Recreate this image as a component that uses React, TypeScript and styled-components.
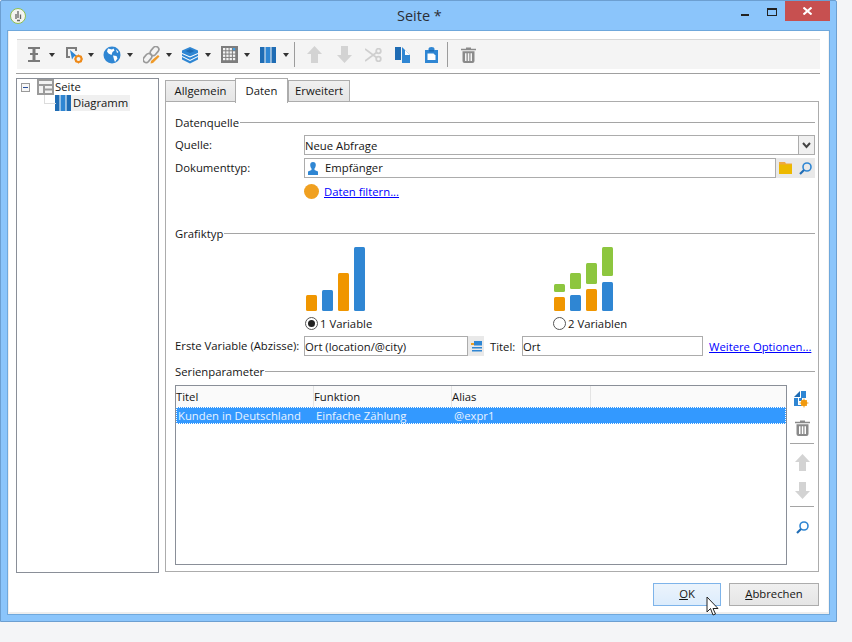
import React from "react";
import styled, { createGlobalStyle } from "styled-components";

const Global = createGlobalStyle`
  html, body { margin: 0; padding: 0; background: #f4f5f7; }
  body { font-family: "Open Sans", "Liberation Sans", sans-serif; font-size: 11.3px; color: #151515; }
  #root { width: 852px; height: 642px; overflow: hidden; }
`;

const Win = styled.div`
  box-sizing: border-box; width: 837px; height: 622px;
  background: #8bc5fb; border: 1px solid #6c9fd1; border-radius: 2px 2px 0 0;
  padding: 0 6px 6px; display: flex; flex-direction: column;
`;
const TitleBar = styled.div`
  height: 29px; flex: none; display: flex; position: relative; align-items: flex-start;
`;
const AppIcon = styled.svg`margin: 7px 0 0 3px;`;
const TitleText = styled.div`
  position: absolute; left: 390px; top: 5px; font-size: 14.5px; line-height: 20px; color: #2b2f36;
`;
const Controls = styled.div`margin-left: auto; display: flex; align-items: flex-start;`;
const MinBtn = styled.div`width: 8px; height: 2px; background: #222; margin: 13px 18px 0 0;`;
const MaxBtn = styled.div`
  box-sizing: border-box; width: 10px; height: 8px; border: 1px solid #222; border-top-width: 2px; margin: 7px 8px 0 0;
`;
const CloseBtn = styled.div`
  width: 45px; height: 20px; background: #c75050; display: flex; align-items: center; justify-content: center;
`;

const Client = styled.div`
  flex: 1; min-height: 0; box-sizing: border-box; background: #fff;
  border: 1px solid #6fa8dc; box-shadow: inset 1px -2px 0 #eeeeee, inset -1px 0 0 #f4f4f4;
  padding: 8px 9px 0 8px; display: flex; flex-direction: column;
`;
const Toolbar = styled.div`
  margin-left: 1px; height: 30px; flex: none; box-sizing: border-box; background: #f4f4f4;
  border-top: 1px solid #d8d8d8; padding-left: 9px; display: flex; align-items: center;
`;
const ToolMenu = styled.div<{ $w?: number }>`
  width: ${p => p.$w ?? 39}px; flex: none; display: flex; align-items: center; gap: 5px;
`;
const ToolIcon = styled.div<{ $w?: number }>`
  width: ${p => p.$w ?? 30}px; flex: none; display: flex; align-items: center;
`;
const Caret = styled.div`
  width: 0; height: 0; border: 3.5px solid transparent; border-top: 4px solid #333; border-bottom: 0;
`;
const ToolSep = styled.div<{ $after: number }>`
  width: 1px; height: 25px; background: #9c9c9c; flex: none; margin-right: ${p => p.$after}px;
`;
const HRule = styled.div`height: 1px; background: #a0a0a0; margin-top: 4px; flex: none;`;

const Main = styled.div`
  margin-top: 4px; height: 495px; flex: none; display: flex; gap: 6px;
`;
const Tree = styled.div`
  width: 143px; box-sizing: border-box; border: 1px solid #8a8f98; flex: none; padding-top: 0; position: relative;
`;
const TreeRow = styled.div<{ $indent: number }>`
  display: flex; align-items: center; height: 16px; padding-left: ${p => p.$indent}px;
`;
const Expander = styled.div`
  box-sizing: border-box; width: 9px; height: 9px; border: 1px solid #9a9a9a; margin-right: 7px;
  display: flex; align-items: center; justify-content: center; background: #f6f6f6;
  &::after { content: ""; width: 5px; height: 1px; background: #2a4f9a; }
`;
const TreeLabel = styled.div<{ $selected?: boolean }>`
  line-height: 16px; padding: 0 2px 0 ${p => (p.$selected ? 2 : 1)}px;
  background: ${p => (p.$selected ? "#f0f0f0" : "transparent")};
`;
const Connector = styled.div`
  position: absolute; left: 27px; top: 16px; width: 11px; height: 8px;
  border-left: 1px solid #dcdcdc; border-bottom: 1px solid #dcdcdc;
`;

const TabsArea = styled.div`flex: 1; min-width: 0; display: flex; flex-direction: column; height: 494px; margin-right: 1px;`;
const TabBar = styled.div`height: 24px; flex: none; display: flex; align-items: flex-end; position: relative; z-index: 1; margin-bottom: -1px;`;
const Tab = styled.div<{ $active?: boolean; $w: number }>`
  box-sizing: border-box; width: ${p => p.$w}px; height: ${p => (p.$active ? 25 : 22)}px;
  margin-left: ${p => (p.$active ? -1 : 0)}px;
  border: 1px solid #acacac; border-bottom: ${p => (p.$active ? "none" : "1px solid #acacac")};
  background: ${p => (p.$active ? "#fff" : "linear-gradient(#f0f0f0, #e5e5e5)")};
  display: flex; align-items: center; justify-content: center; padding-bottom: 2px;
  ${p => (p.$active ? "position: relative; top: 1px;" : "")}
`;
const Panel = styled.div`
  flex: 1; min-height: 0; box-sizing: border-box; border: 1px solid #acacac; background: #fff;
  padding: 12px 3px 6px 9px; display: flex; flex-direction: column;
`;
const Legend = styled.div<{ $top?: number }>`
  display: flex; align-items: center; gap: 1px; height: 16px; flex: none; margin-top: ${p => p.$top ?? 0}px;
  &::after { content: ""; flex: 1; height: 1px; background: #a5a5a5; }
`;
const FieldRow = styled.div<{ $top: number }>`
  display: flex; align-items: center; height: 20px; flex: none; margin-top: ${p => p.$top}px;
`;
const Label = styled.div<{ $w?: number }>`
  width: ${p => (p.$w ? `${p.$w}px` : "auto")}; flex: none; margin-top: -2px;
`;
const Input = styled.div<{ $w?: number }>`
  box-sizing: border-box; height: 20px; border: 1px solid #acacac; background: #fff;
  padding-left: 0; display: flex; align-items: center; gap: 7px; min-width: 0;
  ${p => (p.$w ? `width: ${p.$w}px; flex: none;` : "flex: 1;")}
`;
const Raised = styled.span`margin-top: -2px;`;
const DropArrow = styled.div`
  margin-left: auto; width: 16px; height: 18px; box-sizing: border-box; border-left: 1px solid #acacac;
  background: #f0f0f0; display: flex; align-items: center; justify-content: center;
`;
const FieldButtons = styled.div<{ $w: number }>`
  width: ${p => p.$w}px; height: 20px; flex: none; background: #e9e9e9; display: flex; align-items: center; justify-content: space-around;
`;
const Link = styled.a`color: #0000ff; text-decoration: underline; cursor: pointer;`;
const FilterRow = styled.div`
  display: flex; align-items: center; gap: 5px; height: 16px; margin: 5px 0 0 129px; flex: none;
`;
const Dot = styled.div`width: 15px; height: 15px; border-radius: 50%; background: #f0a020; flex: none;`;
const ChartRow = styled.div`display: flex; padding-left: 130px; margin-top: 6px; flex: none;`;
const ChartOption = styled.div`width: 248px; display: flex; flex-direction: column; align-items: flex-start;`;
const ChartSvg = styled.svg`margin-left: 1px; display: block;`;
const RadioLine = styled.div`margin-top: 5px; height: 14px; display: flex; align-items: center; gap: 2px;`;
const Radio = styled.div<{ $on?: boolean }>`
  box-sizing: border-box; width: 13px; height: 13px; border-radius: 50%; border: 1px solid #555; background: #fff;
  display: flex; align-items: center; justify-content: center;
  &::after { content: ""; width: 7px; height: 7px; border-radius: 50%; background: ${p => (p.$on ? "#222" : "transparent")}; }
`;
const TableWrap = styled.div`flex: 1; min-height: 0; display: flex; margin-top: 6px;`;
const Table = styled.div`
  flex: none; width: 612px; box-sizing: border-box; border: 1px solid #8a8f98; background: #fff; padding-top: 0;
`;
const HeaderRow = styled.div`display: flex; height: 21px; background: #fafafa;`;
const HeadCell = styled.div<{ $w: number }>`
  box-sizing: border-box; width: ${p => p.$w}px; padding-left: 0; line-height: 21px; border-right: 1px solid #e4e4e4;
`;
const DataRow = styled.div`
  display: flex; height: 17px; background: #3399ff; color: #e8f3ff; outline: 1px dotted #fff; outline-offset: -1px; align-items: center;
`;
const DataCell = styled.div<{ $w: number }>`width: ${p => p.$w}px; padding-left: 2px; box-sizing: border-box;`;
const SideBar = styled.div`
  width: 26px; margin-left: 2px; flex: none; display: flex; flex-direction: column; align-items: center;
`;
const SideIcon = styled.div<{ $top: number }>`margin-top: ${p => p.$top}px; height: 16px; display: flex; align-items: center; justify-content: center;`;
const SideRule = styled.div<{ $top: number }>`width: 24px; height: 1px; background: #a5a5a5; margin-top: ${p => p.$top}px;`;

const Footer = styled.div`
  flex: none; display: flex; justify-content: flex-end; gap: 8px; margin-top: 10px; padding-right: 1px;
`;
const Btn = styled.div<{ $w: number; $primary?: boolean }>`
  box-sizing: border-box; width: ${p => p.$w}px; height: 23px; position: relative; padding-bottom: 2px;
  border: 1px solid ${p => (p.$primary ? "#7eb4ea" : "#acacac")};
  background: ${p => (p.$primary ? "linear-gradient(#ecf4fc, #dcecfc)" : "linear-gradient(#f0f0f0, #e5e5e5)")};
  display: flex; align-items: center; justify-content: center;
`;
const Cursor = styled.svg`position: absolute; left: 52px; top: 12px;`;
const BeamSvg = styled.svg`margin-left: 2px;`;
const Spacer = styled.span`width: 3px; flex: none; margin-right: -7px;`;
const TitleLabel = styled.div`width: 32px; margin-left: 6px; flex: none;`;
const OptionsLink = styled(Link)`margin-left: 6px; white-space: nowrap;`;

const gray = "#8a8a8a";
const blue = "#2f86d3";
const dark = "#1f6cb4";
const orange = "#f09600";

const IBeam = () => (
  <BeamSvg width="12" height="18" viewBox="0 0 12 18"><path d="M0 1h12v2H7.500v4H10v2H7.500v5H12v2H0v-2h4.500V9H2V7h2.500V3H0z" fill="#7a7a7a" /></BeamSvg>
);
const ActionIcon = () => (
  <svg width="18" height="18" viewBox="0 0 18 18">
    <path d="M1 1h11v4h-2V3H3v7h2v2H1z" fill="#7d7d7d" />
    <path d="M5 4l7 6-3 .5-2 3z" fill={blue} />
    <circle cx="13.500" cy="13" r="3" fill="none" stroke="#ee8a1a" strokeWidth="2" />
    <path d="M13.500 8.500v1.500M13.500 16v1.500M9 13h1.500M16.500 13H18M10.500 10l1 1M15.500 15l1 1M10.500 16l1-1M15.500 11l1-1" stroke="#ee8a1a" strokeWidth="1.200" />
  </svg>
);
const Globe = () => (
  <svg width="18" height="18" viewBox="1 0 18 18" overflow="visible">
    <circle cx="9" cy="9" r="8.500" fill={blue} />
    <path d="M5 2.500l4 1 1.500-1 1 2-2 1.500-1 3-3-1.500-1.500-2zM10 9.500l3.500.5 1 2.500-2.500 3.500-1-2.500zM13 3.500l2.500 2.500-1.500 1z" fill="#fff" />
  </svg>
);
const LinkIcon = () => (
  <svg width="17" height="18" viewBox="0 0 17 18">
    <g fill="none" stroke="#9a9a9a" strokeWidth="1.700">
      <rect x="8.500" y="0" width="6" height="10" rx="3" transform="rotate(40 11.500 5)" />
      <rect x="1.500" y="7" width="6" height="10" rx="3" transform="rotate(40 4.500 12)" />
    </g>
    <path d="M15 9l1.500 1.500L10 17l-2.500.5.500-2.500z" fill="#ee9a2a" />
  </svg>
);
const Layers = () => (
  <svg width="16" height="18" viewBox="0 0 16 18">
    <path d="M8 1l8 3.500v9L8 17.500 0 13.500v-9z" fill={blue} />
    <path d="M8 3l4.500 2L8 7 3.500 5z" fill={dark} />
    <path d="M0 7.500L8 11l8-3.500M0 10.500L8 14.500l8-4" fill="none" stroke="#fff" strokeWidth="1.100" />
  </svg>
);
const Grid = () => (
  <svg width="17" height="17" viewBox="0 0 17 17">
    <rect width="17" height="17" fill="#7d7d7d" />
    {[0, 1, 2, 3].flatMap(r => [0, 1, 2, 3].map(c => (
      <rect key={`${r}-${c}`} x={2 + c * 3.3} y={2 + r * 3.3} width="2.300" height="2.300" fill={r === 0 && c === 3 ? "#3fa0e8" : "#f4f4f4"} />
    )))}
  </svg>
);
const Columns = ({ h = 16 }: { h?: number }) => (
  <svg width="16" height={h} viewBox={`0 0 16 ${h}`}>
    <rect x="0" width="4.500" height={h} fill={dark} />
    <rect x="5.500" width="5" height={h} fill="#2f86d3" />
    <rect x="11.500" width="4.500" height={h} fill={dark} />
  </svg>
);
const ArrowUp = () => (
  <svg width="15" height="17" viewBox="0 0 15 17"><path d="M7.500 0L15 8h-4v9H4V8H0z" fill="#d3d3d3" /></svg>
);
const ArrowDown = () => (
  <svg width="15" height="17" viewBox="0 0 15 17"><path d="M7.500 17L15 9h-4V0H4v9H0z" fill="#d3d3d3" /></svg>
);
const Scissors = () => (
  <svg width="17" height="14" viewBox="0 0 17 14">
    <g fill="none" stroke="#cfcfcf" strokeWidth="1.800">
      <circle cx="13.500" cy="3" r="2.300" /><circle cx="13.500" cy="11" r="2.300" />
      <path d="M0 1l11.500 8.500M0 13L11.500 4.500" />
    </g>
  </svg>
);
const Copy = () => (
  <svg width="15" height="16" viewBox="0 0 15 16">
    <path d="M0 0h6v13H0z" fill={dark} />
    <path d="M7 3h3l5 5v8H7z" fill={blue} />
    <path d="M10 3l5 5h-5z" fill="#fff" />
    <path d="M7 0l3 3H7z" fill={blue} />
  </svg>
);
const Paste = () => (
  <svg width="13" height="16" viewBox="0 0 13 16">
    <path d="M0 3h3.500V2a3 2 0 016 0v1H13v13H0z" fill={blue} />
    <path d="M2.500 6.500h6l2 2V13h-8z" fill="#fff" />
    <path d="M4 3h5v1.500H4z" fill={dark} />
  </svg>
);
const Trash = () => (
  <svg width="15" height="16" viewBox="0 0 15 16">
    <path d="M5 .5h5v1.300h5V3.300H0V1.800h5z" fill={gray} />
    <path d="M1.500 4.300h12V14a2 2 0 01-2 2h-8a2 2 0 01-2-2zM4 6.300V14h1.500V6.300zM6.800 6.300V14h1.500V6.300zM9.500 6.300V14H11V6.300z" fill={gray} fillRule="evenodd" />
  </svg>
);
const NewSeries = () => (
  <svg width="16" height="17" viewBox="0 0 16 17">
    <path d="M0 6L6 0v6z" fill={dark} />
    <path d="M7 0h5v7H8v3H5V7H7z" fill={blue} />
    <path d="M0 7h4v8H0z" fill={blue} />
    <path d="M4 15h4v-1H4z" fill={blue} />
    <circle cx="10" cy="12" r="3.200" fill="#f09a10" />
    <path d="M10 7.500v9M5.500 12h9M7 9l6 6M13 9l-6 6" stroke="#f09a10" strokeWidth=".8" />
  </svg>
);
const Person = () => (
  <svg width="10" height="13" viewBox="0 0 10 13"><path d="M5 0a2.800 3 0 012.800 3c0 1.500-.8 3-1.300 3.500V8l3.500 1.500V13H0V9.500L3.500 8V6.500C3 6 2.200 4.500 2.200 3A2.800 3 0 015 0z" fill={blue} /></svg>
);
const Search = () => (
  <svg width="13" height="13" viewBox="0 0 13 13">
    <circle cx="8" cy="5" r="4" fill="none" stroke={blue} strokeWidth="1.600" />
    <path d="M1 12l4-4" stroke={dark} strokeWidth="2.200" />
  </svg>
);

const Chart = ({ bars, w }: { bars: [number, number, number, string][]; w: number }) => (
  <ChartSvg width={w} height="64" viewBox={`0 0 ${w} 64`}>
    {bars.map(([x, y, h, c], i) => <rect key={i} x={x} y={y} width="11" height={h} rx="1.500" fill={c} />)}
  </ChartSvg>
);
const green = "#8dc63f";
const bars1: [number, number, number, string][] = [
  [0, 48, 16, orange], [16, 43, 21, blue], [32, 26, 38, orange], [48, 0, 64, blue],
];
const bars2: [number, number, number, string][] = [
  [0, 37, 8, green], [0, 50, 14, orange], [16, 26, 16, green], [16, 48, 16, blue],
  [32, 16, 21, green], [32, 42, 22, orange], [48, 0, 29, green], [48, 35, 29, blue],
];

export default function App() {
  return (
    <>
      <Global />
      <Win>
        <TitleBar>
          <AppIcon width="16" height="16" viewBox="0 0 16 16">
            <circle cx="8" cy="8" r="7.500" fill="#f4f4f0" stroke="#8fbf50" />
            <path d="M8 3v7M6 6v5M10.500 6.500v4.500M7 12.500h3" stroke="#666" strokeWidth="1.300" fill="none" />
          </AppIcon>
          <TitleText>Seite *</TitleText>
          <Controls>
            <MinBtn />
            <MaxBtn />
            <CloseBtn>
              <svg width="9" height="8" viewBox="0 0 9 8"><path d="M.5.500l8 7M8.500.500l-8 7" stroke="#fff" strokeWidth="2" /></svg>
            </CloseBtn>
          </Controls>
        </TitleBar>
        <Client>
          <Toolbar>
            <ToolMenu><ToolIcon $w={18}><IBeam /></ToolIcon><Caret /></ToolMenu>
            <ToolMenu><ToolIcon $w={18}><ActionIcon /></ToolIcon><Caret /></ToolMenu>
            <ToolMenu><ToolIcon $w={18}><Globe /></ToolIcon><Caret /></ToolMenu>
            <ToolMenu><ToolIcon $w={18}><LinkIcon /></ToolIcon><Caret /></ToolMenu>
            <ToolMenu><ToolIcon $w={18}><Layers /></ToolIcon><Caret /></ToolMenu>
            <ToolMenu><ToolIcon $w={18}><Grid /></ToolIcon><Caret /></ToolMenu>
            <ToolMenu $w={34}><ToolIcon $w={18}><Columns /></ToolIcon><Caret /></ToolMenu>
            <ToolSep $after={12} />
            <ToolIcon><ArrowUp /></ToolIcon>
            <ToolIcon $w={28}><ArrowDown /></ToolIcon>
            <ToolIcon><Scissors /></ToolIcon>
            <ToolIcon><Copy /></ToolIcon>
            <ToolIcon $w={22}><Paste /></ToolIcon>
            <ToolSep $after={13} />
            <ToolIcon><Trash /></ToolIcon>
          </Toolbar>
          <HRule />
          <Main>
            <Tree>
              <Connector />
              <TreeRow $indent={4}>
                <Expander />
                <svg width="17" height="16" viewBox="0 0 17 16">
                  <rect width="17" height="16" fill="#9a9a9a" />
                  <rect x="2" y="2" width="13" height="3" fill="#f2f2f2" />
                  <rect x="2" y="7" width="4" height="7" fill="#f2f2f2" />
                  <rect x="8" y="7" width="7" height="2.500" fill="#f2f2f2" />
                  <rect x="8" y="11.500" width="7" height="2.500" fill="#f2f2f2" />
                </svg>
                <TreeLabel>Seite</TreeLabel>
              </TreeRow>
              <TreeRow $indent={38}>
                <Columns />
                <TreeLabel $selected>Diagramm</TreeLabel>
              </TreeRow>
            </Tree>
            <TabsArea>
              <TabBar>
                <Tab $w={71}>Allgemein</Tab>
                <Tab $w={53} $active>Daten</Tab>
                <Tab $w={62}>Erweitert</Tab>
              </TabBar>
              <Panel>
                <Legend>Datenquelle</Legend>
                <FieldRow $top={5}>
                  <Label $w={129}>Quelle:</Label>
                  <Input>Neue Abfrage
                    <DropArrow>
                      <svg width="9" height="7" viewBox="0 0 9 7"><path d="M1 1l3.500 4L8 1" fill="none" stroke="#444" strokeWidth="2" /></svg>
                    </DropArrow>
                  </Input>
                </FieldRow>
                <FieldRow $top={3}>
                  <Label $w={129}>Dokumenttyp:</Label>
                  <Input>
                    <Spacer />
                    <Person />
                    <Raised>Empfänger</Raised>
                  </Input>
                  <FieldButtons $w={39}>
                    <svg width="13" height="12" viewBox="0 0 13 12"><path d="M0 0h6l1 1.500h6V3H0z" fill="#f0a840" /><path d="M0 2.500h13V12H0z" fill="#edb900" /></svg>
                    <Search />
                  </FieldButtons>
                </FieldRow>
                <FilterRow><Dot /><Link>Daten filtern...</Link></FilterRow>
                <Legend $top={26}>Grafiktyp</Legend>
                <ChartRow>
                  <ChartOption>
                    <Chart bars={bars1} w={60} />
                    <RadioLine><Radio $on />1 Variable</RadioLine>
                  </ChartOption>
                  <ChartOption>
                    <Chart bars={bars2} w={60} />
                    <RadioLine><Radio />2 Variablen</RadioLine>
                  </ChartOption>
                </ChartRow>
                <FieldRow $top={6}>
                  <Label $w={129}>Erste Variable (Abzisse):</Label>
                  <Input $w={164}>Ort (location/@city)</Input>
                  <FieldButtons $w={16}>
                    <svg width="11" height="11" viewBox="0 0 11 11">
                      <rect x="0" y="2" width="3" height="2" fill="#f0a020" />
                      <rect x="3" y="0" width="8" height="4.500" fill={blue} />
                      <rect x="1" y="6" width="10" height="1.500" fill={blue} />
                      <rect x="1" y="9" width="10" height="1.500" fill={blue} />
                    </svg>
                  </FieldButtons>
                  <TitleLabel>Titel:</TitleLabel>
                  <Input $w={181}>Ort</Input>
                  <OptionsLink>Weitere Optionen...</OptionsLink>
                </FieldRow>
                <Legend $top={7}>Serienparameter</Legend>
                <TableWrap>
                  <Table>
                    <HeaderRow>
                      <HeadCell $w={138}>Titel</HeadCell>
                      <HeadCell $w={138}>Funktion</HeadCell>
                      <HeadCell $w={139}>Alias</HeadCell>
                    </HeaderRow>
                    <DataRow>
                      <DataCell $w={138}>Kunden in Deutschland</DataCell>
                      <DataCell $w={138}>Einfache Zählung</DataCell>
                      <DataCell $w={139}>@expr1</DataCell>
                    </DataRow>
                  </Table>
                  <SideBar>
                    <SideIcon $top={6}><NewSeries /></SideIcon>
                    <SideIcon $top={13}><Trash /></SideIcon>
                    <SideRule $top={7} />
                    <SideIcon $top={10}><ArrowUp /></SideIcon>
                    <SideIcon $top={12}><ArrowDown /></SideIcon>
                    <SideRule $top={8} />
                    <SideIcon $top={12}><Search /></SideIcon>
                  </SideBar>
                </TableWrap>
              </Panel>
            </TabsArea>
          </Main>
          <Footer>
            <Btn $w={68} $primary>
              <span><u>O</u>K</span>
              <Cursor width="13" height="20" viewBox="0 0 13 20">
                <path d="M1 1v15l3.500-3.500L7 19l2.500-1-2.500-5.500h5z" fill="#fff" stroke="#222" strokeWidth="1" />
              </Cursor>
            </Btn>
            <Btn $w={90}><span><u>A</u>bbrechen</span></Btn>
          </Footer>
        </Client>
      </Win>
    </>
  );
}
